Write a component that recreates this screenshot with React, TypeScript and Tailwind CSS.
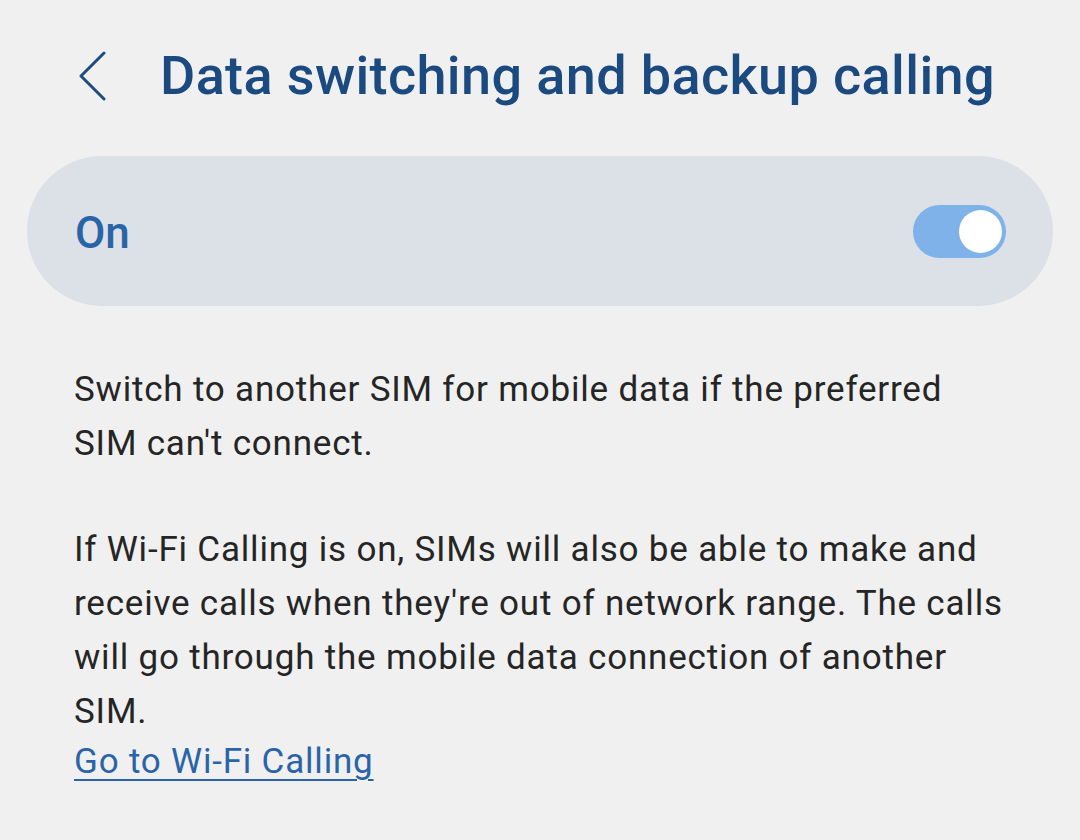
export default function App() {
  return (
    <div
      className="w-[1080px] h-[840px] bg-[#f0f0f0] overflow-hidden"
      style={{ fontFamily: 'Roboto, "Noto Sans", sans-serif' }}
    >
      <div className="flex items-center h-[150px] pl-[78px] pt-[2px]">
        <svg width="30" height="50" viewBox="0 0 30 50" className="shrink-0">
          <path d="M26 2 L3 25 L26 48" fill="none" stroke="#1d4c82" strokeWidth="3" strokeLinecap="round" strokeLinejoin="round" />
        </svg>
        <h1 className="ml-[52px] text-[54px] font-medium text-[#1b4a80] tracking-[0.38px] leading-none whitespace-nowrap">
          Data switching and backup calling
        </h1>
      </div>

      <div className="mx-[27px] mt-[6px] h-[150px] rounded-full bg-[#dce0e7] flex items-center justify-between pl-[48px] pr-[47px]">
        <span className="text-[44px] font-medium text-[#2a64a8] leading-none pt-[3px]">On</span>
        <div className="w-[93px] h-[53px] rounded-full bg-[#7eb2e8] flex items-center justify-end pr-[4px]">
          <div className="w-[43px] h-[43px] rounded-full bg-white" />
        </div>
      </div>

      <div className="px-[74px] pt-[57px] text-[35px] tracking-[0.8px] leading-[54px] text-[#252525] whitespace-nowrap">
        <p>
          Switch to another SIM for mobile data if the preferred
          <br />
          SIM can't connect.
        </p>
        <p className="mt-[52px]">
          If Wi-Fi Calling is on, SIMs will also be able to make and
          <br />
          receive calls when they're out of network range. The calls
          <br />
          will go through the mobile data connection of another
          <br />
          SIM.
        </p>
        <a href="#" className="block text-[#2a64a8] underline decoration-[2px] underline-offset-[6px] leading-[46px]">
          Go to Wi-Fi Calling
        </a>
      </div>
    </div>
  );
}
